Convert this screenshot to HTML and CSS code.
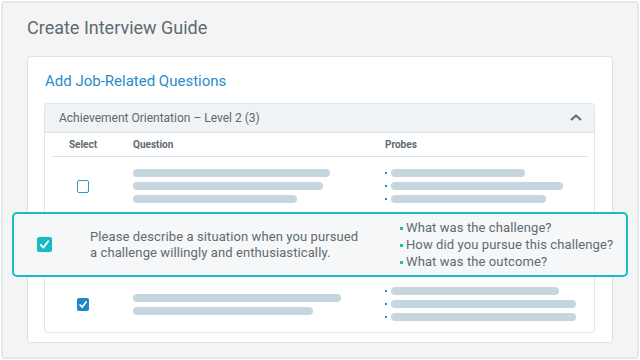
FILE: index.html
```html
<!DOCTYPE html>
<html lang="en">
<head>
<meta charset="utf-8">
<title>Create Interview Guide</title>
<link rel="stylesheet" href="styles.css">
</head>
<body>
<div class="frame">
  <h1 class="title">Create Interview Guide</h1>
  <div class="card">
    <h2 class="card-title">Add Job-Related Questions</h2>
    <div class="panel">
      <div class="panel-head">
        <span>Achievement Orientation – Level 2 (3)</span>
        <svg class="chevron" width="12" height="7" viewBox="0 0 12 7"><polyline points="1,6 6,1.5 11,6" fill="none" stroke="#5c6770" stroke-width="2"/></svg>
      </div>
      <div class="table">
        <div class="row head-row">
          <div class="c-select">Select</div>
          <div>Question</div>
          <div>Probes</div>
        </div>
        <div class="row">
          <div class="c-select"><span class="box"></span></div>
          <div class="bars">
            <span class="bar" style="width:197px"></span>
            <span class="bar" style="width:190px"></span>
            <span class="bar" style="width:164px"></span>
          </div>
          <div class="bars">
            <span class="pbar"><i class="dot"></i><span class="bar" style="width:134px"></span></span>
            <span class="pbar"><i class="dot"></i><span class="bar" style="width:172px"></span></span>
            <span class="pbar"><i class="dot"></i><span class="bar" style="width:155px"></span></span>
          </div>
        </div>
        <div class="hl-row">
          <div class="c-select"><span class="box teal"><svg width="15" height="15" viewBox="0 0 15 15"><polyline points="3.8,7.8 6.3,10.6 11.2,4.2" fill="none" stroke="#fff" stroke-width="1.8" stroke-linecap="round" stroke-linejoin="round"/></svg></span></div>
          <div class="q-text">Please describe a situation when you pursued<br>a challenge willingly and enthusiastically.</div>
          <ul class="probes">
            <li><i class="tdot"></i>What was the challenge?</li>
            <li><i class="tdot"></i>How did you pursue this challenge?</li>
            <li><i class="tdot"></i>What was the outcome?</li>
          </ul>
        </div>
        <div class="row last">
          <div class="c-select"><span class="box blue"><svg width="12" height="13" viewBox="0 0 12 13"><polyline points="3,6.8 5.2,9.3 9.2,3.8" fill="none" stroke="#fff" stroke-width="1.6" stroke-linecap="round" stroke-linejoin="round"/></svg></span></div>
          <div class="bars">
            <span class="bar" style="width:208px"></span>
            <span class="bar" style="width:180px"></span>
          </div>
          <div class="bars">
            <span class="pbar"><i class="dot"></i><span class="bar" style="width:168px"></span></span>
            <span class="pbar"><i class="dot"></i><span class="bar" style="width:185px"></span></span>
            <span class="pbar"><i class="dot"></i><span class="bar" style="width:185px"></span></span>
          </div>
        </div>
      </div>
    </div>
  </div>
</div>
</body>
</html>
```
FILE: styles.css
```css
* { box-sizing: border-box; }
html, body { margin: 0; padding: 0; background: #ffffff; }
body { font-family: Roboto, "Liberation Sans", sans-serif; }

.frame {
  margin: 1px;
  width: 638px;
  height: 358px;
  background: #f4f4f4;
  border: 2px solid #e3e8eb;
  border-radius: 3px;
  padding: 13px 24px 0 24px;
}

.title {
  margin: 0;
  font-size: 18px;
  line-height: 24px;
  font-weight: 400;
  color: #5e6a72;
  height: 40px;
}

.card {
  background: #ffffff;
  border: 1px solid #dde4e8;
  border-radius: 3px;
  padding: 14px 17px 9px 16px;
}

.card-title {
  margin: 0 0 12px 1px;
  font-size: 15px;
  line-height: 20px;
  font-weight: 400;
  color: #2a8cc7;
}

.panel {
  border: 1px solid #dfe6ea;
  border-radius: 3px;
}

.panel-head {
  height: 29px;
  background: #eff3f5;
  border-bottom: 1px solid #dbe3e7;
  display: flex;
  align-items: center;
  justify-content: space-between;
  padding: 0 12px 0 14px;
  font-size: 12px;
  line-height: 28px;
  color: #5d6870;
}
.chevron { display: block; margin-top: -2px; }

.table {
  padding: 0 7px 11px 8px;
}

.row {
  display: grid;
  grid-template-columns: 60px 232px 1fr;
  column-gap: 20px;
  align-items: center;
  padding: 12px 0 9px;
}
.row.last { padding: 10px 0 0; }

.head-row {
  padding: 6px 0 5px;
  border-bottom: 1px solid #dbe4e8;
  font-size: 10px;
  line-height: 12px;
  font-weight: 700;
  color: #5e6a72;
}
.c-select { display: flex; justify-content: center; }

.box {
  display: block;
  width: 12px;
  height: 13px;
  border: 1px solid #3a92cb;
  border-radius: 2px;
  background: #fff;
}
.box svg { display: block; }
.box.blue { border: none; background: #1f87c6; }
.box.teal { border: none; background: #18bac3; width: 15px; height: 15px; }

.bars { display: flex; flex-direction: column; gap: 5px; }
.bar {
  display: block;
  height: 8px;
  border-radius: 4px;
  background: #c6d6de;
}
.pbar { display: flex; align-items: center; }
.dot {
  display: block;
  width: 2px;
  height: 2px;
  background: #2a8cc7;
  margin-left: 0;
  margin-right: 4px;
}

.hl-row {
  margin: 0 -41px;
  display: grid;
  grid-template-columns: 61px 1fr 226px;
  column-gap: 15px;
  align-items: center;
  padding: 5px 0;
  background: #f5f7f8;
  border: 2px solid #19bcc5;
  border-radius: 5px;
  color: #5f6a72;
  font-size: 13px;
  letter-spacing: 0.1px;
}
.q-text { line-height: 16px; }
.probes {
  list-style: none;
  margin: 0;
  padding: 0;
  line-height: 17px;
}
.probes li { display: flex; align-items: center; }
.tdot {
  display: block;
  width: 3px;
  height: 3px;
  background: #19bcc5;
  margin-right: 3px;
  margin-top: 1px;
}
```
